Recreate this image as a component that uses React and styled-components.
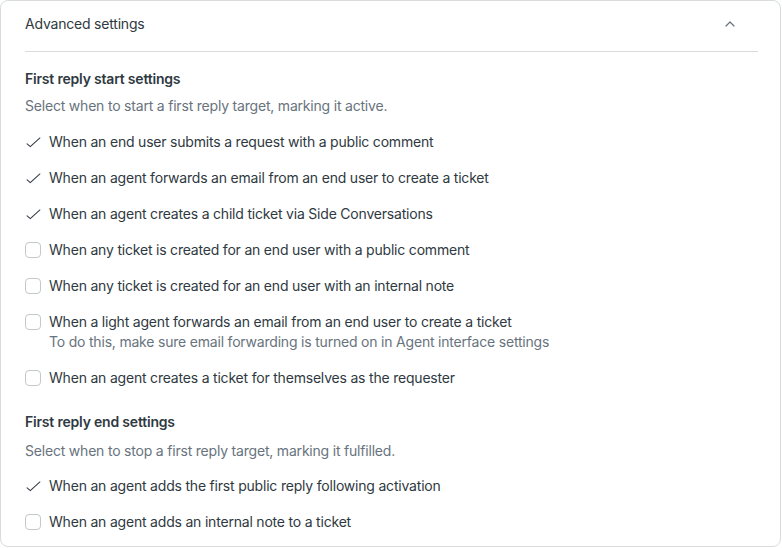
import React from "react";
import styled, { createGlobalStyle } from "styled-components";

const GlobalStyle = createGlobalStyle`
  html, body {
    margin: 0;
    padding: 0;
    background: #ffffff;
  }
  body {
    font-family: Inter, "Noto Sans", "Liberation Sans", sans-serif;
    letter-spacing: -0.2px;
    -webkit-font-smoothing: antialiased;
  }
`;

const startOptions = [
  { label: "When an end user submits a request with a public comment", checked: true },
  { label: "When an agent forwards an email from an end user to create a ticket", checked: true },
  { label: "When an agent creates a child ticket via Side Conversations", checked: true },
  { label: "When any ticket is created for an end user with a public comment" },
  { label: "When any ticket is created for an end user with an internal note" },
  {
    label: "When a light agent forwards an email from an end user to create a ticket",
    hint: "To do this, make sure email forwarding is turned on in Agent interface settings",
  },
  { label: "When an agent creates a ticket for themselves as the requester" },
];

const endOptions = [
  { label: "When an agent adds the first public reply following activation", checked: true },
  { label: "When an agent adds an internal note to a ticket" },
];

export default function App() {
  return (
    <>
      <GlobalStyle />
      <Card>
        <Header>
          <HeaderTitle>Advanced settings</HeaderTitle>
          <Chevron viewBox="0 0 12 12">
            <path d="M2 8 L6 4 L10 8" />
          </Chevron>
        </Header>
        <Section>
          <SectionTitle>First reply start settings</SectionTitle>
          <Description>Select when to start a first reply target, marking it active.</Description>
          <OptionList>
            {startOptions.map((o) => (
              <Option key={o.label} {...o} />
            ))}
          </OptionList>
        </Section>
        <Section $second>
          <SectionTitle>First reply end settings</SectionTitle>
          <Description>Select when to stop a first reply target, marking it fulfilled.</Description>
          <OptionList>
            {endOptions.map((o) => (
              <Option key={o.label} {...o} />
            ))}
          </OptionList>
        </Section>
      </Card>
    </>
  );
}

function Option({ label, hint, checked }) {
  return (
    <Row>
      <Marker>
        {checked ? (
          <Check viewBox="0 0 16 12">
            <path d="M1 7.5 L4.5 10.5 L15 1" />
          </Check>
        ) : (
          <Box />
        )}
      </Marker>
      <div>
        <Label>{label}</Label>
        {hint && <Hint>{hint}</Hint>}
      </div>
    </Row>
  );
}

const Card = styled.div`
  box-sizing: border-box;
  width: 781px;
  height: 547px;
  border: 1px solid #d8dcde;
  border-radius: 8px;
  padding: 0 22px 0 24px;
  overflow: hidden;
`;

const Header = styled.div`
  display: flex;
  align-items: center;
  justify-content: space-between;
  box-sizing: border-box;
  height: 51px;
  padding-bottom: 5px;
  border-bottom: 1px solid #d8dcde;
`;

const HeaderTitle = styled.span`
  font-size: 14px;
  line-height: 20px;
  color: #2f3941;
`;

const Chevron = styled.svg`
  width: 12px;
  height: 12px;
  margin-right: 22px;
  fill: none;
  stroke: #68737d;
  stroke-width: 1.2;
  stroke-linecap: round;
  stroke-linejoin: round;
`;

const SectionTitle = styled.h3`
  margin: 0;
  font-size: 14px;
  line-height: 20px;
  font-weight: 600;
  color: #2f3941;
`;

const Description = styled.p`
  margin: 7px 0 0;
  font-size: 14px;
  line-height: 20px;
  color: #68737d;
`;

const OptionList = styled.div`
  display: flex;
  flex-direction: column;
  gap: 16px;
  margin-top: 16px;
`;

const Section = styled.section`
  padding-top: ${(p) => (p.$second ? "24px" : "17px")};

  ${Description} {
    margin-top: ${(p) => (p.$second ? "9px" : "7px")};
  }

  ${OptionList} {
    margin-top: ${(p) => (p.$second ? "15px" : "16px")};
  }
`;

const Row = styled.div`
  display: flex;
  align-items: flex-start;
  gap: 8px;
`;

const Marker = styled.div`
  width: 16px;
  height: 20px;
  display: flex;
  align-items: center;
  justify-content: center;
  flex-shrink: 0;
`;

const Check = styled.svg`
  width: 15px;
  height: 11px;
  fill: none;
  stroke: #2f3941;
  stroke-width: 1.1;
  stroke-linecap: round;
  stroke-linejoin: round;
`;

const Box = styled.span`
  box-sizing: border-box;
  width: 16px;
  height: 16px;
  border: 1px solid #c2c8cc;
  border-radius: 4px;
  background: #fff;
`;

const Label = styled.div`
  font-size: 14px;
  line-height: 20px;
  color: #2f3941;
`;

const Hint = styled.div`
  font-size: 14px;
  line-height: 20px;
  color: #68737d;
`;
